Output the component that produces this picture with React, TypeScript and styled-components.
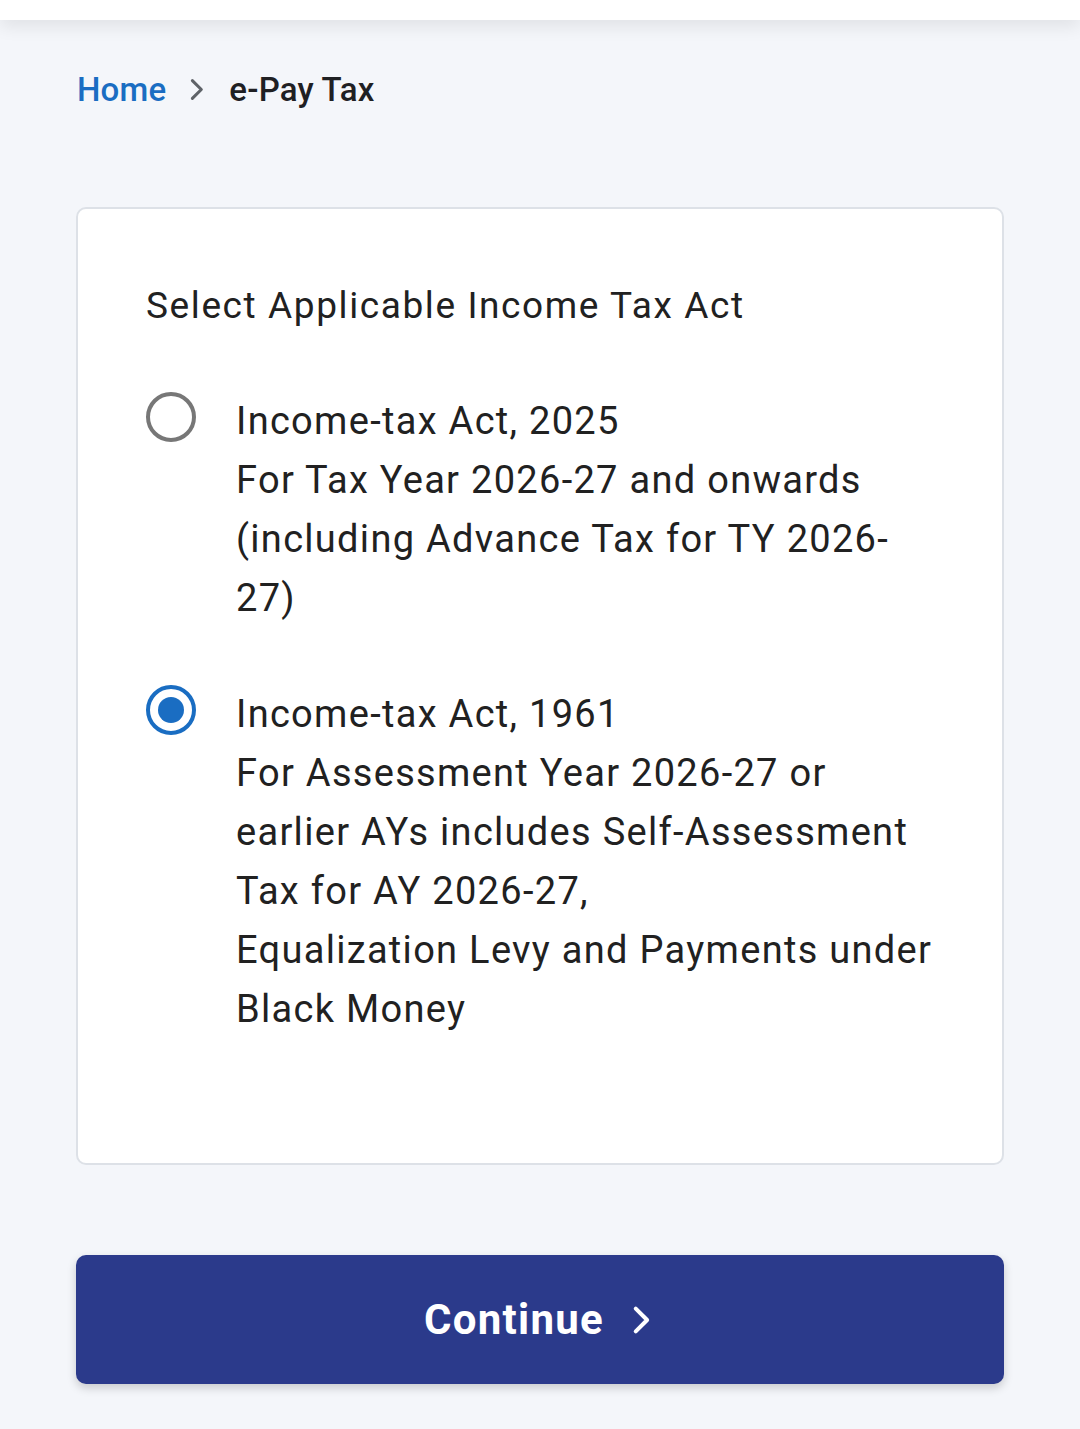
import React, { useState } from 'react'
import styled, { createGlobalStyle } from 'styled-components'

const GlobalStyle = createGlobalStyle`
  html, body {
    margin: 0;
    padding: 0;
    background: #f4f6fa;
    font-family: Roboto, "Noto Sans", "Liberation Sans", sans-serif;
    color: #1f1f1f;
  }
  * { box-sizing: border-box; }
`

const options = [
    {
        id: '2025',
        lines: [
            'Income-tax Act, 2025',
            'For Tax Year 2026-27 and onwards (including Advance Tax for TY 2026-27)',
        ],
    },
    {
        id: '1961',
        lines: [
            'Income-tax Act, 1961',
            'For Assessment Year 2026-27 or earlier AYs includes Self-Assessment Tax for AY 2026-27,',
            'Equalization Levy and Payments under Black Money',
        ],
    },
]

const ChevronRight = ({ size, color, stroke }: { size: number, color: string, stroke: number }) => (
    <svg width={size} height={size} viewBox="0 0 24 24" fill="none">
        <path d="M9 5.5l6.5 6.5L9 18.5" stroke={color} strokeWidth={stroke} strokeLinecap="round" strokeLinejoin="round" />
    </svg>
)

const App = () => {
    const [selected, setSelected] = useState('1961')
    return (
        <Page>
            <GlobalStyle />
            <TopBar />
            <Main>
                <Breadcrumb>
                    <Crumb href="#">Home</Crumb>
                    <Separator>
                        <ChevronRight size={33} color="#5f6368" stroke={2.2} />
                    </Separator>
                    <Current>e-Pay Tax</Current>
                </Breadcrumb>

                <Card>
                    <Title>Select Applicable Income Tax Act</Title>
                    <OptionList>
                        {options.map(opt => (
                            <Option key={opt.id} onClick={() => setSelected(opt.id)}>
                                <Radio checked={selected === opt.id} />
                                <OptionText>
                                    {opt.lines.map((l, i) => <Line key={i}>{l}</Line>)}
                                </OptionText>
                            </Option>
                        ))}
                    </OptionList>
                </Card>

                <ContinueButton>
                    Continue
                    <ChevronRight size={42} color="#ffffff" stroke={2.3} />
                </ContinueButton>
            </Main>
        </Page>
    )
}

const Page = styled.div`
min-height: 1429px;
background: #f4f6fa;
`

const TopBar = styled.div`
height: 20px;
background: #ffffff;
box-shadow: 0 6px 18px rgba(0, 0, 0, 0.09);
`

const Main = styled.main`
padding: 49px 76px 40px 76px;
`

const Breadcrumb = styled.nav`
display: flex;
align-items: center;
height: 40px;
font-size: 33px;
letter-spacing: 0.2px;
padding-left: 1px;
`

const Crumb = styled.a`
color: #1a6dc2;
text-decoration: none;
font-weight: 500;
`

const Separator = styled.span`
display: flex;
align-items: center;
margin: 0 16px 0 14px;
`

const Current = styled.span`
color: #1f2023;
font-weight: 500;
`

const Card = styled.section`
margin-top: 98px;
background: #ffffff;
border: 2px solid #dde1e7;
border-radius: 10px;
padding: 73px 68px 124px 68px;
`

const Title = styled.h2`
margin: 0;
font-size: 37px;
font-weight: 400;
line-height: 48px;
color: #212121;
letter-spacing: 1.6px;
`

const OptionList = styled.div`
display: flex;
flex-direction: column;
gap: 57px;
margin-top: 62px;
`

const Option = styled.label`
display: flex;
align-items: flex-start;
gap: 40px;
cursor: pointer;
`

const Radio = styled.span<{ checked: boolean }>`
flex: none;
position: relative;
width: 50px;
height: 50px;
margin-top: 0;
border-radius: 50%;
border: 4px solid ${props => props.checked ? '#1a6dc2' : '#777777'};
&::after {
  content: '';
  position: absolute;
  inset: 8px;
  border-radius: 50%;
  background: #1a6dc2;
  display: ${props => props.checked ? 'block' : 'none'};
}
`

const OptionText = styled.div`
flex: 1;
font-size: 38px;
line-height: 59px;
color: #212121;
letter-spacing: 1.3px;
`

const Line = styled.div``

const ContinueButton = styled.button`
margin-top: 90px;
width: 100%;
height: 129px;
display: flex;
align-items: center;
justify-content: center;
gap: 16px;
border: none;
border-radius: 10px;
background: #2b3a8b;
color: #ffffff;
font-family: Roboto, "Noto Sans", "Liberation Sans", sans-serif;
font-size: 42px;
font-weight: 700;
letter-spacing: 1.3px;
box-shadow: 0 4px 10px rgba(0, 0, 0, 0.18);
cursor: pointer;
padding-left: 12px;
`

export default App
